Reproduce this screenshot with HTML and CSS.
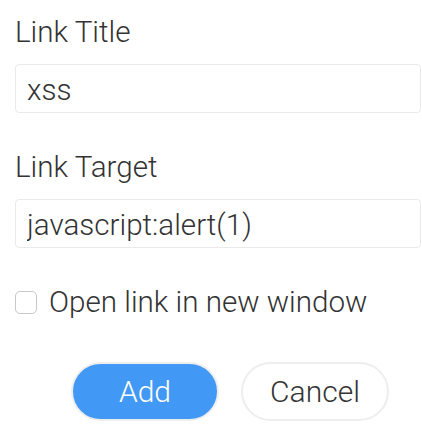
FILE: index.html
```html
<!DOCTYPE html>
<html>
<head>
<meta charset="utf-8">
<link rel="stylesheet" href="styles.css">
</head>
<body>
<form class="form">
  <div class="field">
    <label class="label">Link Title</label>
    <input class="input" type="text" value="xss">
  </div>
  <div class="field">
    <label class="label">Link Target</label>
    <input class="input" type="text" value="javascript:alert(1)">
  </div>
  <label class="check-row">
    <input class="check" type="checkbox">
    <span class="check-text">Open link in new window</span>
  </label>
  <div class="actions">
    <button type="button" class="btn btn-primary">Add</button>
    <button type="button" class="btn btn-default">Cancel</button>
  </div>
</form>
</body>
</html>
```
FILE: styles.css
```css
html, body {
  margin: 0;
  padding: 0;
  background: #fff;
}
body {
  font-family: Roboto, "Liberation Sans", sans-serif;
  color: #333;
}
.form {
  padding: 16px 1px 0 15px;
  display: flex;
  flex-direction: column;
}
.field {
  display: flex;
  flex-direction: column;
  gap: 16px;
  margin-bottom: 38px;
}
.label {
  font-size: 29.6px;
  line-height: 32px;
  font-weight: 300;
  color: #333;
}
.input {
  box-sizing: border-box;
  width: 100%;
  height: 49px;
  margin: 0;
  padding: 2px 11px 0;
  border: 1px solid #eaeaea;
  border-radius: 4px;
  font-family: Roboto, "Liberation Sans", sans-serif;
  font-size: 29.6px;
  font-weight: 300;
  color: #333;
  background: #fff;
  outline: none;
}
.check-row {
  display: flex;
  align-items: center;
  gap: 12px;
  height: 32px;
}
.check {
  appearance: none;
  -webkit-appearance: none;
  box-sizing: border-box;
  width: 22px;
  height: 23px;
  margin: 0;
  border: 1.5px solid #c8c8c8;
  border-radius: 5px;
  background: #fff;
}
.check-text {
  font-size: 29.6px;
  line-height: 32px;
  font-weight: 300;
  color: #333;
}
.actions {
  display: flex;
  gap: 22px;
  margin-top: 44px;
  padding-left: 56px;
}
.btn {
  box-sizing: border-box;
  width: 148px;
  height: 59px;
  border-radius: 30px;
  border: 2px solid #eeeeee;
  font-family: Roboto, "Liberation Sans", sans-serif;
  font-size: 30px;
  font-weight: 300;
  padding: 0;
}
.btn-primary {
  background: #4299f5;
  color: #fff;
}
.btn-default {
  background: #fff;
  color: #333;
}
```
